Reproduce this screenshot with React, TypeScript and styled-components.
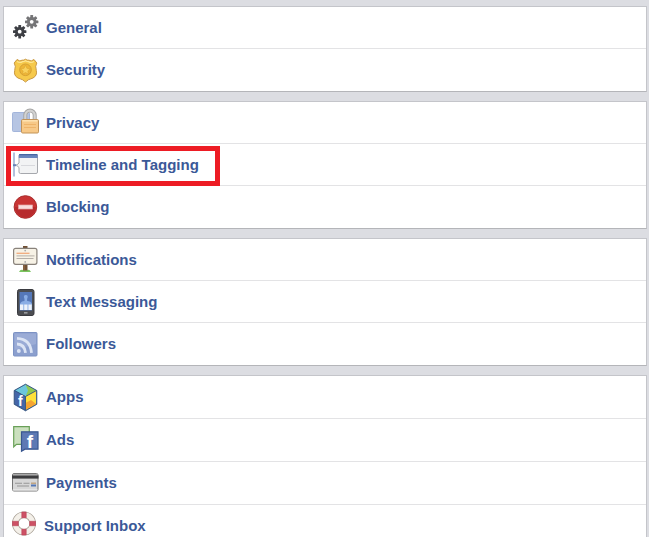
import React from "react";
import styled, { createGlobalStyle } from "styled-components";

const GlobalStyle = createGlobalStyle`
  body {
    margin: 0;
    background: #dcdde2;
    font-family: "Liberation Sans", Arial, sans-serif;
  }
`;

const Menu = styled.nav`
  display: flex;
  flex-direction: column;
  gap: 9px;
  padding: 6px 2px 6px 3px;
`;

const Group = styled.ul`
  list-style: none;
  margin: 0;
  padding: 0;
  background: #fff;
  border: 1px solid #c4c5ca;
  border-bottom-color: #b4b5b9;
`;

const Row = styled.li<{ $tall?: boolean }>`
  position: relative;
  box-sizing: border-box;
  height: ${(p) => (p.$tall ? 43 : 42)}px;
  border-bottom: 1px solid #e3e3e5;

  &:last-child {
    border-bottom-color: transparent;
  }
`;

const RowLink = styled.a<{ $tight?: boolean }>`
  display: flex;
  align-items: center;
  gap: ${(p) => (p.$tight ? 4 : 6)}px;
  padding: 7px 8px;
  height: 27px;
  color: #3b5998;
  font-size: 15px;
  line-height: 20px;
  font-weight: bold;
  text-decoration: none;

  &:hover {
    text-decoration: underline;
  }
`;

const Glyph = styled.svg`
  flex: none;
  width: 28px;
  height: 27px;
  overflow: visible;
`;

const Highlight = styled.span`
  position: absolute;
  box-sizing: border-box;
  left: 2px;
  top: 2px;
  width: 214px;
  height: 40px;
  border: 5px solid #ed1c24;
  pointer-events: none;
  z-index: 1;
`;

const teeth = [0, 45, 90, 135];

function Gear({ x, y, color }: { x: number; y: number; color: string }) {
  return (
    <g transform={`translate(${x} ${y})`}>
      {teeth.map((a) => (
        <rect key={a} x="-1.4" y="-6.7" width="2.8" height="13.4" rx=".5" fill={color} transform={`rotate(${a})`} />
      ))}
      <circle r="4.8" fill={color} />
      <circle r="1.9" fill="#fff" />
    </g>
  );
}

const icons = {
  gears: (
    <>
      <Gear x={7.7} y={17.7} color="#3d3f44" />
      <Gear x={19.7} y={7.8} color="#757577" />
    </>
  ),
  badge: (
    <>
      <path d="M5 3.500Q8 6 10 4.200Q12 4.500 13.500 3.200Q15 4.500 17 4.200Q19 6 22 3.500L24.800 7Q22.800 10 24.300 14.500Q25.500 19.500 21 22Q15.500 23.500 13.500 26Q11.500 23.500 6 22Q1.500 19.500 2.700 14.500Q4.200 10 2.200 7Z" fill="#f6c94b" stroke="#c99740" strokeWidth="1" />
      <path d="M5 5.500Q8 7.300 10.300 5.700Q12 5.700 13.500 4.700Q15 5.700 16.700 5.700Q19 7.300 22 5.500" fill="none" stroke="#fde695" strokeWidth="1.200" />
      <circle cx="13.500" cy="13.800" r="5.800" fill="#eeb637" stroke="#d6a033" />
      <path d="m13.500 9.300 1.400 3 3.300.4-2.400 2.200.6 3.200-2.900-1.600-2.900 1.600.6-3.200-2.400-2.200 3.300-.4Z" fill="#f9d25e" stroke="#d9a02f" strokeWidth=".5" />
    </>
  ),
  lock: (
    <>
      <rect x=".5" y="3.500" width="17" height="19" rx="1" fill="#b6c5e3" stroke="#a3b5db" />
      <path d="M13.300 11V6.300a4.700 4.700 0 0 1 9.400 0V11" fill="none" stroke="#a5a5a5" strokeWidth="4" />
      <path d="M13.300 11V6.300a4.700 4.700 0 0 1 9.400 0V11" fill="none" stroke="#d3d3d2" strokeWidth="2.200" />
      <rect x="9.500" y="10.500" width="17" height="13.500" rx="1.200" fill="#f7c988" stroke="#c29357" />
      <path d="M10.500 11.800h15" stroke="#fde4b5" strokeWidth="1.400" />
      <path d="M12 15.500h12M12 18.500h12" stroke="#eeb46a" />
    </>
  ),
  timeline: (
    <>
      <path d="M2 1.500v24" stroke="#b3c0dc" strokeWidth="2" />
      <path d="M1 14.200h3.500" stroke="#6881b5" strokeWidth="2" />
      <path d="M7 5q0-1.500 1.500-1.500H24q1.500 0 1.500 1.500v16q0 1.500-1.500 1.500H8.500Q7 22.500 7 21v-4.500l-2.500-2.300L7 12Z" fill="#f2f3f4" stroke="#a6a8ad" />
      <path d="M6.800 7V4.500Q7 3 8.500 3H24q1.500 0 1.700 1.500V7Z" fill="#6985bd" />
      <path d="M7 3.700h18.500" stroke="#405f9c" />
      <path d="M9 14.500h14" stroke="#d8d9dd" />
    </>
  ),
  block: (
    <>
      <circle cx="13.400" cy="14" r="11.300" fill="#c93535" stroke="#a92d2d" />
      <path d="M3 14a10.400 10.400 0 0 0 20.800 0Z" fill="#b72b2d" />
      <rect x="6.500" y="12" width="14" height="4" fill="#f9dede" stroke="#e5a6a5" strokeWidth=".7" />
    </>
  ),
  sign: (
    <>
      <path d="M7 26q1.500-3 3.500-2Q13 21.500 15.500 24q2-1 3.500 2Z" fill="#7ac55f" />
      <rect x="11" y="0" width="4.500" height="24.500" fill="#705034" />
      <path d="M12 18v6" stroke="#9a7148" />
      <rect x="1.600" y="2.300" width="23.300" height="16" rx="2" fill="#f7f2e6" stroke="#89827b" strokeWidth="1.200" />
      <path d="M4.500 7.300h13" stroke="#f1aa7c" strokeWidth="1.300" />
      <path d="M4.500 9.900h18M4.500 12.500h17" stroke="#b5afa9" />
      <circle cx="13.200" cy="4.600" r=".9" fill="#aaa" />
      <circle cx="13.200" cy="15.900" r=".9" fill="#aaa" />
    </>
  ),
  phone: (
    <>
      <rect x="5.500" y="1.500" width="16.500" height="26" rx="2" fill="#4c4e52" stroke="#3a3b40" />
      <rect x="7.500" y="4" width="12.500" height="18.500" fill="#5578b9" />
      <path d="M8 22v-6q1-3 4.500-3v-2q-1.700-4 1.300-4t1.300 4v2q4 0 4.900 3v6Z" fill="#89ade5" />
      <path d="M8 16.500h3.300V22H8zm4.200 0h3.300V22h-3.300zm4.200 0h3.300V22h-3.300z" fill="#edf2fa" />
      <rect x="12" y="24" width="3.500" height="1.600" fill="#9a9ca0" />
    </>
  ),
  feed: (
    <>
      <rect x="1.500" y="2.500" width="23.500" height="23.500" rx="1" fill="#8b9fce" stroke="#7c92c4" />
      <path d="M2.500 3.500h21.500V14L2.500 20Z" fill="#9bacd6" />
      <circle cx="6.800" cy="21" r="2" fill="#dce4f4" />
      <path d="M5 14q7.500 0 8.500 8.800M5 8.300Q18.500 9 19.500 22.800" fill="none" stroke="#dce4f4" strokeWidth="2.800" />
    </>
  ),
  cube: (
    <>
      <path d="m13.500 1.200 11.300 6.300v13.800l-11.300 6.500-11.300-6.500V7.500Z" fill="#3a5691" />
      <path d="m13.500 1.500 10.700 6-10.700 6-10.700-6Z" fill="#6cc6dc" />
      <path d="m13.500 1.500 10.700 6-10.700 6 2.500-6Z" fill="#90c950" />
      <path d="M3 7.500 13.500 13.500V27L3 21Z" fill="#4466a8" />
      <path d="M13.500 13.500 24.200 7.500V21L13.500 27Z" fill="#ffe13b" />
      <path d="m13.500 20 5.500-3 5.200 4L13.500 27Z" fill="#f5a432" />
      <path d="m13.500 1.200 11.300 6.300v13.800l-11.300 6.500-11.300-6.500V7.500ZM2.500 7.500l11 6 11-6M13.500 13.500v14" fill="none" stroke="#31547f" strokeWidth=".9" />
      <text x="6" y="22.500" fill="#fff" fontSize="14" fontWeight="bold">f</text>
    </>
  ),
  ads: (
    <>
      <path d="M1.700.7h15.600v17.600H4.500l-2.800 2.500Z" fill="#cbe0be" stroke="#69a058" strokeWidth="1.200" />
      <path d="M9.500 5.800H26v17.400H13l-3.500 2Z" fill="#5d79b4" stroke="#38568f" strokeWidth="1.200" />
      <text x="14.800" y="21.500" fill="#fff" fontSize="19" fontWeight="bold">f</text>
    </>
  ),
  card: (
    <>
      <rect x=".5" y="4.500" width="25.500" height="17.500" rx="1.500" fill="#d7d7d7" stroke="#777" />
      <path d="M1 5.500h24.500" stroke="#aaa" />
      <path d="M0 8h26.500" stroke="#3d3d3f" strokeWidth="3.200" />
      <path d="M3 14.200h7M11.500 14.200h6M5 17h12" stroke="#969696" strokeWidth="1.100" />
      <path d="M19 14.200h5" stroke="#bd9c74" strokeWidth="1.300" />
      <path d="M19 16.500h5" stroke="#5478b7" strokeWidth="2" />
      <path d="M1 21h24.500" stroke="#f2f2f2" />
    </>
  ),
  buoy: (
    <>
      <circle cx="12" cy="11.500" r="8.700" fill="none" stroke="#aaa298" strokeWidth="6.600" />
      <circle cx="12" cy="11.500" r="8.700" fill="none" stroke="#f4f0e9" strokeWidth="5" />
      {[0, 90, 180, 270].map((a) => (
        <path key={a} d="M9.800 0h4.400v5.800H9.800Z" fill="#cd5165" stroke="#b83f54" strokeWidth=".6" transform={`rotate(${a} 12 11.500)`} />
      ))}
    </>
  ),
};

type Item = { label: string; icon: keyof typeof icons; marked?: boolean; tight?: boolean };

const groups: { tall?: boolean; items: Item[] }[] = [
  {
    items: [
      { label: "General", icon: "gears" },
      { label: "Security", icon: "badge" },
    ],
  },
  {
    items: [
      { label: "Privacy", icon: "lock" },
      { label: "Timeline and Tagging", icon: "timeline", marked: true },
      { label: "Blocking", icon: "block" },
    ],
  },
  {
    items: [
      { label: "Notifications", icon: "sign" },
      { label: "Text Messaging", icon: "phone" },
      { label: "Followers", icon: "feed" },
    ],
  },
  {
    tall: true,
    items: [
      { label: "Apps", icon: "cube" },
      { label: "Ads", icon: "ads" },
      { label: "Payments", icon: "card" },
      { label: "Support Inbox", icon: "buoy", tight: true },
    ],
  },
];

export default function App() {
  return (
    <>
      <GlobalStyle />
      <Menu aria-label="Settings">
        {groups.map((group) => (
          <Group key={group.items[0].label}>
            {group.items.map((item) => (
              <Row key={item.label} $tall={group.tall}>
                <RowLink href="#" $tight={item.tight}>
                  <Glyph viewBox="0 0 28 27" aria-hidden="true">
                    {icons[item.icon]}
                  </Glyph>
                  {item.label}
                </RowLink>
                {item.marked && <Highlight />}
              </Row>
            ))}
          </Group>
        ))}
      </Menu>
    </>
  );
}
